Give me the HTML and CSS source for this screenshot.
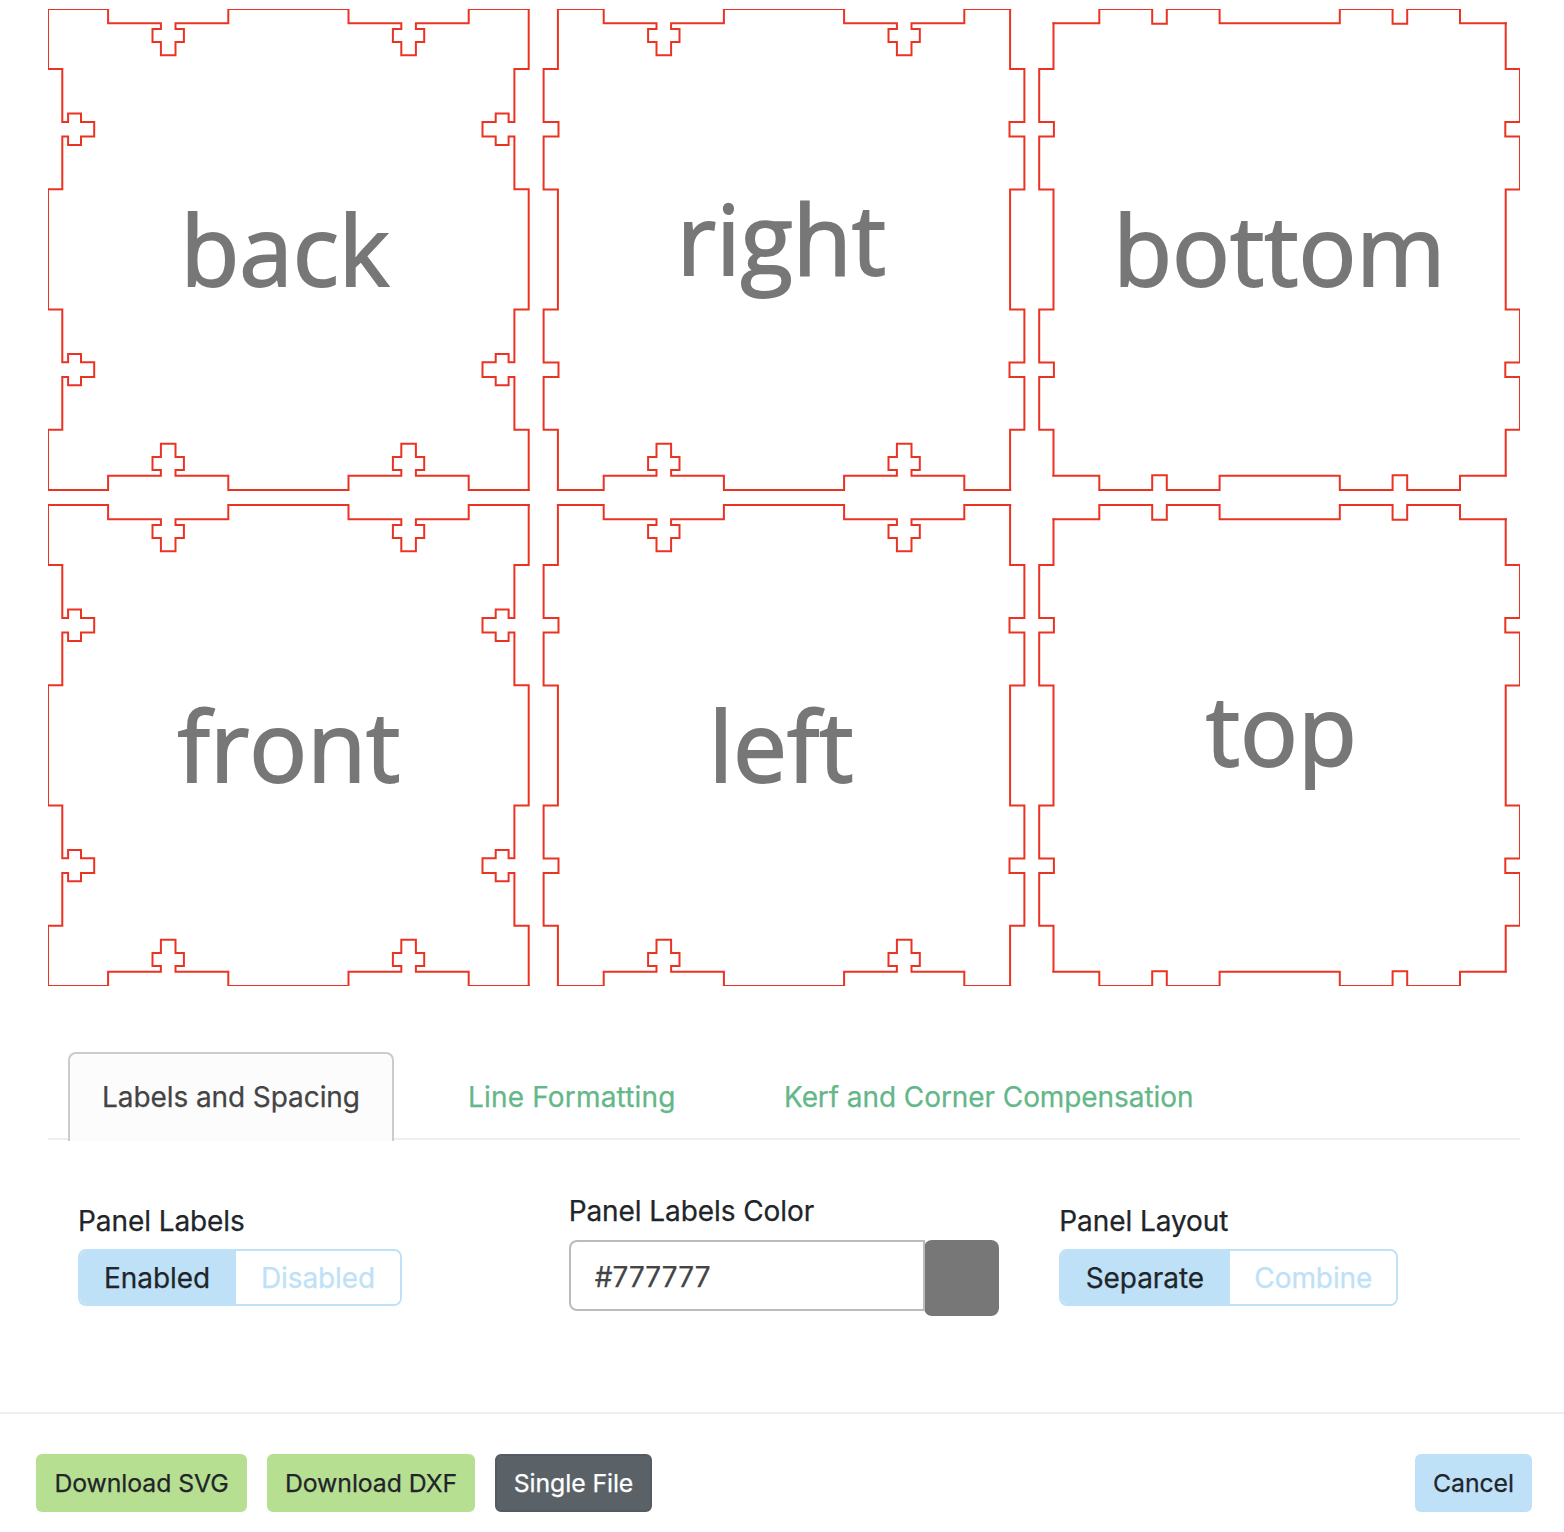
FILE: index.html
```html
<!DOCTYPE html>
<html lang="en">
<head>
<meta charset="utf-8">
<title>Box panels</title>
<link rel="stylesheet" href="styles.css">
</head>
<body>
<main class="content">
  <svg class="preview" viewBox="0 0 1472 977" width="1472" height="977">
    <defs>
      <path id="slots-full" d="M0 0H60.1V14.3H112.9V20.1H104.5V33H112.9V46.2H127.5V33H135.9V20.1H127.5V14.3H180.3V0H300.5V14.3H353.3V20.1H344.9V33H353.3V46.2H367.9V33H376.2V20.1H367.9V14.3H420.7V0H480.8"/>
      <path id="slots-inset" d="M14.3 0H60.1V14.3H112.9V20.1H104.5V33H112.9V46.2H127.5V33H135.9V20.1H127.5V14.3H180.3V0H300.5V14.3H353.3V20.1H344.9V33H353.3V46.2H367.9V33H376.2V20.1H367.9V14.3H420.7V0H466.6"/>
      <path id="tabs-full" d="M0 14.3H60.1V0H113V14.9H127.6V0H180.4V14.3H300.6V0H353.4V14.9H368V0H420.8V14.3H481"/>
      <path id="tabs-inset" d="M14.3 14.3H60.1V0H113V14.7H127.6V0H180.4V14.3H300.6V0H353.4V14.7H368V0H420.8V14.3H466.5"/>
      <g id="panel-slots">
        <use href="#slots-full"/>
        <use href="#slots-full" transform="matrix(1 0 0 -1 0 481)"/>
        <use href="#slots-full" transform="matrix(0 1 1 0 0 0)"/>
        <use href="#slots-full" transform="matrix(0 1 -1 0 480.7 0)"/>
      </g>
      <g id="panel-side">
        <use href="#slots-inset"/>
        <use href="#slots-inset" transform="matrix(1 0 0 -1 0 481)"/>
        <use href="#tabs-full" transform="matrix(0 1 1 0 0 0)"/>
        <use href="#tabs-full" transform="matrix(0 1 -1 0 480.8 0)"/>
      </g>
      <g id="panel-cap">
        <use href="#tabs-inset"/>
        <use href="#tabs-inset" transform="matrix(1 0 0 -1 0 481)"/>
        <use href="#tabs-inset" transform="matrix(0 1 1 0 0 0)"/>
        <use href="#tabs-inset" transform="matrix(0 1 -1 0 480.8 0)"/>
      </g>
    </defs>
    <g class="cut">
      <use href="#panel-slots"/>
      <use href="#panel-side" x="495.6"/>
      <use href="#panel-cap" x="991.2"/>
      <use href="#panel-slots" y="496"/>
      <use href="#panel-side" x="495.6" y="496"/>
      <use href="#panel-cap" x="991.2" y="496"/>
    </g>
    <g class="panel-label">
      <text x="236.9" y="277">back</text>
      <text x="733.4" y="266">right</text>
      <text x="1231.3" y="277">bottom</text>
      <text x="241" y="773">front</text>
      <text x="733.2" y="773">left</text>
      <text x="1233.3" y="757.3">top</text>
    </g>
  </svg>

  <nav class="tabs">
    <a class="tab tab-labels tab-active"><span>Labels and Spacing</span></a>
    <a class="tab tab-line"><span>Line Formatting</span></a>
    <a class="tab tab-kerf"><span>Kerf and Corner Compensation</span></a>
  </nav>

  <section class="options">
    <div class="option">
      <div class="label">Panel Labels</div>
      <div class="toggle toggle-labels"><button class="on">Enabled</button><button class="off">Disabled</button></div>
    </div>
    <div class="option option-color">
      <div class="label">Panel Labels Color</div>
      <div class="color"><div class="color-value">#777777</div><div class="swatch"></div></div>
    </div>
    <div class="option">
      <div class="label">Panel Layout</div>
      <div class="toggle toggle-layout"><button class="on">Separate</button><button class="off">Combine</button></div>
    </div>
  </section>
</main>
<footer class="footer">
  <button class="btn btn-green btn-svg">Download SVG</button>
  <button class="btn btn-green btn-dxf">Download DXF</button>
  <button class="btn btn-dark">Single File</button>
  <button class="btn btn-cancel">Cancel</button>
</footer>
</body>
</html>
```
FILE: styles.css
```css
* { box-sizing: border-box; }
body {
  margin: 0;
  height: 1532px;
  display: flex;
  flex-direction: column;
  background: #fff;
  color: #212529;
  font: 400 28px/42px Inter, "Liberation Sans", sans-serif;
  letter-spacing: -0.08px;
  -webkit-text-stroke: 0.25px currentColor;
  overflow: hidden;
}
button { font: inherit; letter-spacing: inherit; color: inherit; border: 0; padding: 0; margin: 0; white-space: nowrap; }
.content { height: 1412px; padding: 9px 44px 0 48px; }
.preview { display: block; overflow: hidden; }
.cut { fill: none; stroke: #ea3323; stroke-width: 2; stroke-linecap: square; }
.panel-label {
  fill: #777;
  stroke: #777;
  stroke-width: 1.8;
  font: 400 96.2px "Open Sans", sans-serif;
  letter-spacing: 0;
  text-anchor: middle;
  -webkit-text-stroke: 0;
}

.tabs {
  display: flex;
  gap: 40px;
  height: 88px;
  margin-top: 66px;
  padding-left: 20px;
  border-bottom: 2px solid #eee;
}
.tab {
  height: 89px;
  padding: 22px 0 0 32px;
  border: 2px solid transparent;
  border-bottom: 0;
  border-radius: 8px 8px 0 0;
  color: #63b788;
  white-space: nowrap;
}
.tab-labels { width: 326px; }
.tab-line { width: 276px; letter-spacing: 0.18px; }
.tab-active { background: #fcfcfc; border-color: #ccc; color: #444; }

.options { display: grid; grid-template-columns: repeat(3, 490.67px); margin-top: 50px; }
.option { padding: 10px 30px 0; }
.option-color { padding-top: 0; }
.label { height: 49px; }
.option-color .label { height: 50px; }
.toggle { display: flex; height: 57px; border: 2px solid #bee1f7; border-radius: 8px; overflow: hidden; }
.toggle-labels { width: 324px; }
.toggle-layout { width: 339px; }
.on { background: #bee1f7; padding-right: 2px; }
.off { background: #fff; color: #bee1f7; flex: 1; }
.toggle-labels .on { width: 156px; }
.toggle-layout .on { width: 169px; }
.color { display: flex; align-items: flex-start; width: 430px; }
.color-value {
  width: 356px;
  height: 71px;
  padding: 14px 24px;
  border: 2px solid #bbb;
  border-radius: 8px 0 0 8px;
  color: #444;
  letter-spacing: 0.05px;
  position: relative;
}
.swatch { width: 75px; height: 76px; margin-left: -1px; border-radius: 8px; background: #777; }

.footer {
  display: flex;
  gap: 20px;
  height: 120px;
  padding: 40px 32px 0 36px;
  border-top: 2px solid #eee;
}
.btn { height: 58px; border-radius: 6px; font-size: 24.8px; }
.btn-green { background: #b7df92; }
.btn-svg { width: 211px; }
.btn-dxf { width: 208px; }
.btn-dark { width: 157px; background: #5a6268; border: 2px solid #545b62; color: #fff; }
.btn-cancel { width: 117px; margin-left: auto; background: #bee1f7; }
```
